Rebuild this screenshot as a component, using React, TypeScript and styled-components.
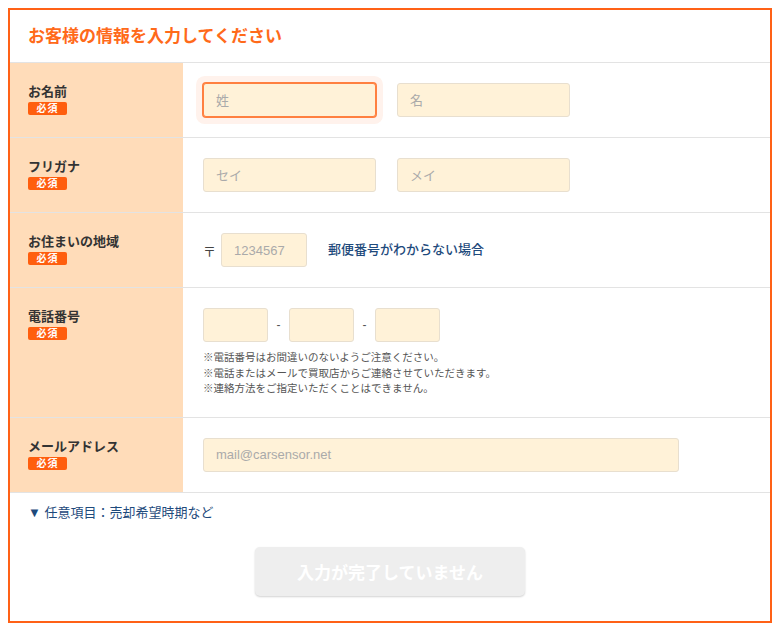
import React from 'react';
import styled, {createGlobalStyle} from 'styled-components';

const GlobalStyle = createGlobalStyle`
body{
margin: 8px;
background: #fff;
font-family: "Liberation Sans", "Noto Sans CJK JP", sans-serif;
color: #333;
}
*{box-sizing: border-box;}
`;

const Frame = styled.div`
width: 764px;
height: 615px;
border: 2px solid #ff6116;
background: #fff;
display: flex;
flex-direction: column;
`;
const Title = styled.h2`
margin: 0;
height: 53px;
padding: 0 18px 4px;
display: flex;
align-items: center;
font-size: 17px;
font-weight: bold;
color: #ff6a1a;
border-bottom: 1px solid #e3e3e3;
`;
const Row = styled.div`
display: flex;
border-bottom: 1px solid #e3e3e3;
`;
const Label = styled.div`
width: 173px;
flex-shrink: 0;
background: #ffdcb9;
padding: 20px 18px 0;
font-size: 13px;
font-weight: bold;
color: #333;
line-height: 17px;
`;
const Badge = styled.span`
display: block;
width: 39px;
height: 13px;
margin-top: 2px;
border-radius: 2px;
background: #ff5e0e;
color: #fff;
font-size: 10px;
line-height: 13px;
text-align: center;
font-weight: bold;
letter-spacing: 1px;
`;
const Cell = styled.div`
flex: 1;
padding: 20px 20px;
`;
const Line = styled.div<{gap?: number}>`
display: flex;
align-items: center;
gap: ${p => p.gap ?? 21}px;
`;
const Input = styled.input<{w: number; focused?: boolean}>`
width: ${p => p.w}px;
height: 34px;
padding: 0 12px;
background: #fff2d8;
border: 1px solid ${p => p.focused ? '#ff8040' : '#e8dfcf'};
border-radius: 3px;
font-family: "Liberation Sans", "Noto Sans CJK JP", sans-serif;
font-size: 13px;
color: #333;
outline: none;
box-shadow: ${p => p.focused ? '0 0 0 1px #ff8040, 0 0 0 7px #fff2ec' : 'none'};
&::placeholder{
color: #aaa;
}
`;
const Postal = styled.span`
font-size: 13px;
color: #444;
`;
const Link = styled.a`
font-size: 13px;
color: #1e4a7c;
text-decoration: none;
font-weight: 500;
margin-bottom: 3px;
`;
const Dash = styled.span`
width: 5px;
text-align: center;
font-size: 12px;
color: #555;
`;
const Notes = styled.div`
margin-top: 8px;
font-size: 10.5px;
line-height: 15.5px;
color: #555;
`;
const Bottom = styled.div`
flex: 1;
padding: 11px 18px 0;
display: flex;
flex-direction: column;
`;
const More = styled.a`
font-size: 13px;
line-height: 18px;
color: #1e4a7c;
text-decoration: none;
`;
const Submit = styled.button`
align-self: center;
margin-top: 25px;
width: 270px;
height: 49px;
border: none;
border-radius: 5px;
background: #eeeeee;
box-shadow: 0 1px 2px rgba(0,0,0,0.18);
color: #fff;
font-family: "Liberation Sans", "Noto Sans CJK JP", sans-serif;
font-size: 17px;
font-weight: bold;
`;

function Required({children}: {children: React.ReactNode}) {
    return <Label>{children}<Badge>必須</Badge></Label>;
}

function App() {
    return (
        <>
            <GlobalStyle/>
            <Frame>
                <Title>お客様の情報を入力してください</Title>
                <Row>
                    <Required>お名前</Required>
                    <Cell>
                        <Line>
                            <Input w={173} focused placeholder="姓"/>
                            <Input w={173} placeholder="名"/>
                        </Line>
                    </Cell>
                </Row>
                <Row>
                    <Required>フリガナ</Required>
                    <Cell>
                        <Line>
                            <Input w={173} placeholder="セイ"/>
                            <Input w={173} placeholder="メイ"/>
                        </Line>
                    </Cell>
                </Row>
                <Row>
                    <Required>お住まいの地域</Required>
                    <Cell>
                        <Line gap={0}>
                            <Postal>〒</Postal>
                            <Input w={86} placeholder="1234567" style={{marginLeft: 5}}/>
                            <Link href="#" style={{marginLeft: 21}}>郵便番号がわからない場合</Link>
                        </Line>
                    </Cell>
                </Row>
                <Row>
                    <Required>電話番号</Required>
                    <Cell>
                        <Line gap={8}>
                            <Input w={65}/>
                            <Dash>-</Dash>
                            <Input w={65}/>
                            <Dash>-</Dash>
                            <Input w={65}/>
                        </Line>
                        <Notes>
                            ※電話番号はお間違いのないようご注意ください。<br/>
                            ※電話またはメールで買取店からご連絡させていただきます。<br/>
                            ※連絡方法をご指定いただくことはできません。
                        </Notes>
                    </Cell>
                </Row>
                <Row>
                    <Required>メールアドレス</Required>
                    <Cell>
                        <Input w={476} placeholder="mail@carsensor.net"/>
                    </Cell>
                </Row>
                <Bottom>
                    <More href="#">▼ 任意項目：売却希望時期など</More>
                    <Submit disabled>入力が完了していません</Submit>
                </Bottom>
            </Frame>
        </>
    );
}

export default App;
